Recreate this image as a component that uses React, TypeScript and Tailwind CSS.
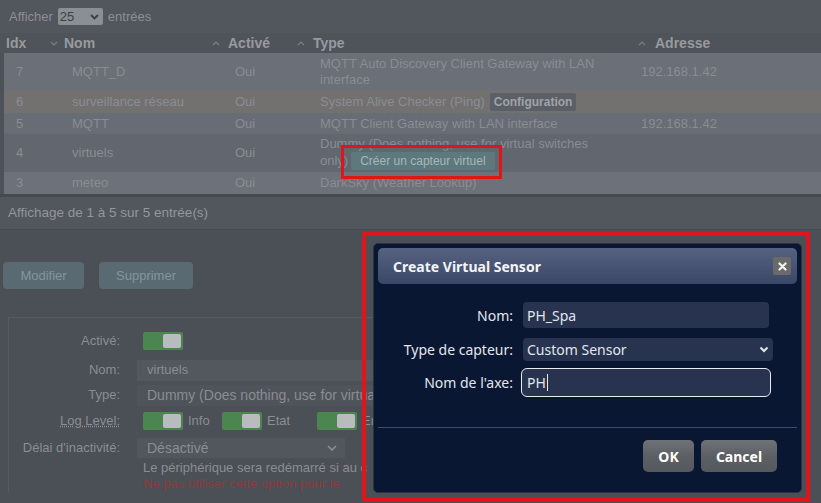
import type { ReactNode } from "react";

type Row = {
  idx: string;
  nom: string;
  type: ReactNode;
  addr?: string;
  bg: string;
  h: string;
};

function SortIcon({ down }: { down?: boolean }) {
  return (
    <svg width="8" height="5" viewBox="0 0 8 5" className="shrink-0">
      <path d={down ? "M1 1 L4 4 L7 1" : "M1 4 L4 1 L7 4"} fill="none" stroke="#7c7f86" strokeWidth="1.2" />
    </svg>
  );
}

function Toggle() {
  return (
    <span className="flex h-[18px] w-[40px] shrink-0 items-center justify-end rounded-[2px] bg-[#4b8650] pr-[2px]">
      <span className="h-[14px] w-[18px] rounded-[2px] bg-[#b9bcbd]" />
    </span>
  );
}

const rows: Row[] = [
  {
    idx: "7",
    nom: "MQTT_D",
    type: (
      <>
        MQTT Auto Discovery Client Gateway with LAN
        <br />
        interface
      </>
    ),
    addr: "192.168.1.42",
    bg: "bg-[#6b6f77]",
    h: "h-[37px]",
  },
  {
    idx: "6",
    nom: "surveillance réseau",
    type: (
      <span className="flex items-center gap-[5px]">
        System Alive Checker (Ping)
        <span className="rounded-[2px] bg-[#5b5f67] px-[4px] py-[1px] text-[12px] font-bold text-[#a0a3a8]">Configuration</span>
      </span>
    ),
    bg: "bg-[#727170]",
    h: "h-[23px]",
  },
  {
    idx: "5",
    nom: "MQTT",
    type: "MQTT Client Gateway with LAN interface",
    addr: "192.168.1.42",
    bg: "bg-[#686c74]",
    h: "h-[21px]",
  },
  {
    idx: "4",
    nom: "virtuels",
    type: (
      <>
        Dummy (Does nothing, use for virtual switches
        <br />
        <span className="flex items-center gap-[3px]">
          only)
          <span className="relative">
            <span className="block rounded-[2px] bg-[#5d797e] px-[9px] py-[1px] text-[12px] leading-4 text-[#a5b7b8]">
              Créer un capteur virtuel
            </span>
            <span className="absolute -bottom-[9px] -left-[10px] -right-[7px] -top-[7px] border-[3px] border-[#e0141b]" />
          </span>
        </span>
      </>
    ),
    bg: "bg-[#62666e]",
    h: "h-[38px]",
  },
  {
    idx: "3",
    nom: "meteo",
    type: "DarkSky (Weather Lookup)",
    bg: "bg-[#6d7179]",
    h: "h-[22px]",
  },
];

export default function App() {
  return (
    <div className="relative h-[503px] w-[821px] overflow-hidden bg-[#4b4f56] font-['Liberation_Sans',Arial,sans-serif] text-[13px]">
      {/* table panel */}
      <div className="bg-[#52565d]">
        <div className="flex h-[33px] items-center gap-[5px] pl-[9px] text-[#8c8f95]">
          <span>Afficher</span>
          <span className="flex h-[17px] w-[45px] items-center justify-between rounded-[2px] bg-[#8b8e93] pl-[2px] pr-[4px] text-[#3c3f45]">
            25
            <svg width="9" height="6" viewBox="0 0 9 6">
              <path d="M1 1 L4.5 4.5 L8 1" fill="none" stroke="#3c3f45" strokeWidth="1.8" />
            </svg>
          </span>
          <span>entrées</span>
        </div>

        <div className="flex h-[20px] items-center bg-[#4f535a] text-[14px] font-bold text-[#979a9f]">
          <div className="w-[44px] pl-[6px]">Idx</div>
          <div className="flex w-[161px] items-center pl-[6px]">
            <span className="w-[14px]">
              <SortIcon down />
            </span>
            Nom
          </div>
          <div className="flex w-[85px] items-center pl-[7px]">
            <span className="w-[16px]">
              <SortIcon />
            </span>
            Activé
          </div>
          <div className="flex w-[340px] items-center pl-[7px]">
            <span className="w-[16px]">
              <SortIcon />
            </span>
            Type
          </div>
          <div className="flex flex-1 items-center pl-[8px]">
            <span className="w-[17px]">
              <SortIcon />
            </span>
            Adresse
          </div>
        </div>

        <div className="border-l-4 border-[#4d5158] text-[#8a8d93]">
          {rows.map((r) => (
            <div key={r.idx} className={`flex items-center leading-4 ${r.bg} ${r.h}`}>
              <div className="w-[40px] pl-[12px]">{r.idx}</div>
              <div className="w-[161px] pl-[28px]">{r.nom}</div>
              <div className="w-[85px] pl-[30px]">Oui</div>
              <div className="w-[340px] pl-[30px]">{r.type}</div>
              <div className="flex-1 pl-[11px]">{r.addr}</div>
            </div>
          ))}
        </div>
        <div className="h-[3px] bg-[#454950]" />
        <div className="flex h-[33px] items-center border-b border-[#464a51] pl-[8px] text-[13.5px] text-[#93969b]">
          Affichage de 1 à 5 sur 5 entrée(s)
        </div>
      </div>

      {/* actions */}
      <div className="flex gap-[15px] pl-[3px] pt-[32px]">
        <span className="flex h-[27px] w-[81px] items-center justify-center rounded-[4px] bg-[#5a6a72] text-[#85959d]">Modifier</span>
        <span className="flex h-[27px] w-[94px] items-center justify-center rounded-[4px] bg-[#5a6a72] text-[#85959d]">Supprimer</span>
      </div>

      {/* device form, cut where the dialog starts */}
      <div className="ml-[8px] mt-[28px] w-[365px] overflow-hidden border-l border-t border-[#565a61] pt-[12px] text-[#8a8d93]">
        <div className="flex h-[22px] items-center">
          <span className="w-[111px] shrink-0 text-right">Activé:</span>
          <span className="ml-[23px]">
            <Toggle />
          </span>
        </div>
        <div className="mt-[7px] flex h-[22px] items-center">
          <span className="w-[111px] shrink-0 text-right">Nom:</span>
          <span className="ml-[17px] flex h-[21px] w-[236px] shrink-0 items-center bg-[#53575e] pl-[10px]">virtuels</span>
        </div>
        <div className="mt-[3px] flex h-[22px] items-center">
          <span className="w-[111px] shrink-0 text-right">Type:</span>
          <span className="ml-[17px] flex h-[21px] w-[236px] shrink-0 items-center overflow-hidden whitespace-nowrap bg-[#4f535a] pl-[10px] text-[14px]">
            Dummy (Does nothing, use for virtual s
          </span>
        </div>
        <div className="mt-[4px] flex h-[22px] items-center">
          <span className="w-[111px] shrink-0 text-right underline decoration-dotted">Log Level:</span>
          <span className="ml-[23px] flex items-center whitespace-nowrap">
            <Toggle />
            <span className="ml-[5px] w-[34px]">Info</span>
            <Toggle />
            <span className="ml-[5px] w-[50px]">Etat</span>
            <Toggle />
            <span className="ml-[5px]">Er</span>
          </span>
        </div>
        <div className="mt-[5px] flex h-[22px] items-center">
          <span className="w-[111px] shrink-0 text-right">Délai d&apos;inactivité:</span>
          <span className="ml-[17px] flex h-[20px] w-[208px] shrink-0 items-center justify-between bg-[#52565d] pl-[10px] pr-[8px] text-[14px]">
            Désactivé
            <svg width="10" height="6" viewBox="0 0 10 6">
              <path d="M1 1 L5 5 L9 1" fill="none" stroke="#8a8d93" strokeWidth="1.6" />
            </svg>
          </span>
        </div>
        <div className="ml-[134px] mt-[1px] w-[230px] overflow-hidden whitespace-nowrap leading-[16px]">
          <div>Le périphérique sera redémarré si au c</div>
          <div className="text-[#8e3b3d]">Ne pas utiliser cette option pour le</div>
        </div>
      </div>

      {/* highlight round the dialog */}
      <div className="absolute left-[362px] top-[232px] h-[270px] w-[448px] border-4 border-[#e0141b]" />

      {/* modal dialog */}
      <div className="absolute left-[373px] top-[243px] flex h-[250px] w-[429px] flex-col rounded-[5px] border border-[#2c3240] bg-[#0a1733] p-[4px] font-['Noto_Sans',sans-serif] text-[14px] text-[#e2e6ec]">
        <div className="flex h-[36px] items-center justify-between rounded-[5px] bg-gradient-to-b from-[#56627f] to-[#3b4768] pl-[15px] pr-[6px]">
          <span className="font-bold text-[#f2f4f8]">Create Virtual Sensor</span>
          <span className="flex h-[18px] w-[18px] items-center justify-center rounded-[2px] bg-[#6a6a6b]">
            <svg width="9" height="9" viewBox="0 0 9 9">
              <path d="M1.5 1.5 L7.5 7.5 M7.5 1.5 L1.5 7.5" stroke="#f2f2f2" strokeWidth="2.2" strokeLinecap="round" />
            </svg>
          </span>
        </div>

        <div className="flex flex-col pt-[18px]">
          <div className="flex h-[26px] items-center">
            <span className="w-[135px] text-right">Nom:</span>
            <span className="ml-[10px] flex h-[26px] w-[246px] items-center rounded-[4px] bg-[#28334f] pl-[4px]">PH_Spa</span>
          </div>
          <div className="mt-[10px] flex h-[23px] items-center">
            <span className="w-[135px] text-right">Type de capteur:</span>
            <span className="ml-[10px] flex h-[23px] w-[250px] items-center justify-between rounded-[4px] bg-[#28334f] pl-[4px] pr-[4px]">
              Custom Sensor
              <svg width="10" height="7" viewBox="0 0 10 7">
                <path d="M1.5 1.5 L5 5 L8.5 1.5" fill="none" stroke="#e2e6ec" strokeWidth="2" />
              </svg>
            </span>
          </div>
          <div className="mt-[7px] flex h-[29px] items-center">
            <span className="w-[135px] text-right">Nom de l&apos;axe:</span>
            <span className="ml-[8px] flex h-[29px] w-[250px] items-center rounded-[6px] border-[1.5px] border-[#e8ebf0] bg-[#28334f] pl-[5px]">
              PH
              <span className="ml-[1px] h-[17px] w-px bg-[#e8ebf0]" />
            </span>
          </div>
        </div>

        <div className="mt-[30px] h-px bg-[#3e4b6a]" />

        <div className="flex justify-end gap-[7px] pr-[20px] pt-[12px]">
          <span className="flex h-[32px] w-[51px] items-center justify-center rounded-[5px] bg-gradient-to-b from-[#6f7276] via-[#5c5f64] to-[#55585d] font-bold text-white">
            OK
          </span>
          <span className="flex h-[32px] w-[76px] items-center justify-center rounded-[5px] bg-gradient-to-b from-[#6f7276] via-[#5c5f64] to-[#55585d] font-bold text-white">
            Cancel
          </span>
        </div>
      </div>
    </div>
  );
}
